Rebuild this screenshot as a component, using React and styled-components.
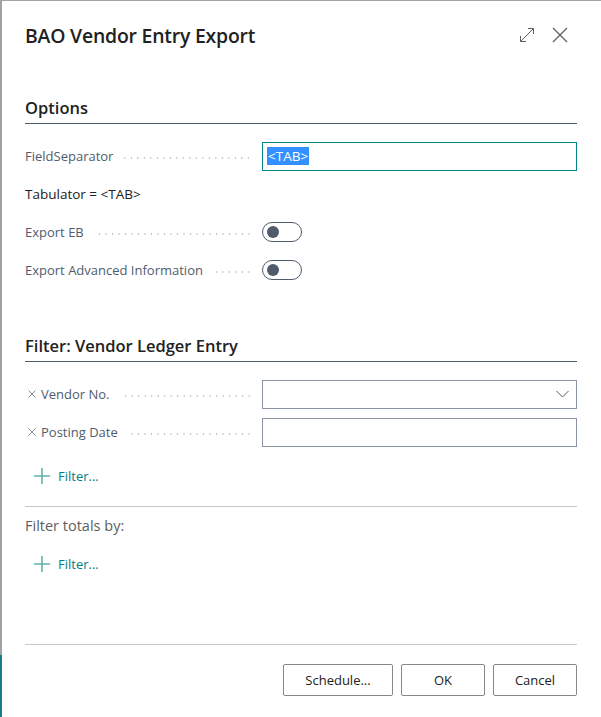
import styled, { createGlobalStyle } from 'styled-components'

const GlobalStyle = createGlobalStyle`
  html, body {
    margin: 0;
    padding: 0;
    height: 100%;
  }
  body {
    background: linear-gradient(to bottom, #9ea3a8 0, #9ea3a8 655px, #1d7c83 655px);
    font-family: 'Open Sans', 'Noto Sans', sans-serif;
    overflow: hidden;
  }
`

const Dialog = styled.div`
  box-sizing: border-box;
  margin: 1px 0 0 2px;
  height: 716px;
  background: #fff;
  display: flex;
  flex-direction: column;
  padding: 0 24px 0 23px;
  color: #212121;
`

const Header = styled.div`
  display: flex;
  align-items: center;
  justify-content: space-between;
  padding-top: 19px;
  height: 30px;
`

const Title = styled.h1`
  margin: 0;
  font-size: 19.4px;
  font-weight: 600;
  letter-spacing: -0.2px;
  color: #212121;
`

const HeaderIcons = styled.div`
  display: flex;
  align-items: center;
  gap: 17px;
  margin-right: 9px;

  svg {
    display: block;
  }
`

const SectionTitle = styled.h2`
  margin: ${p => p.$top}px 0 0;
  font-size: 16.5px;
  font-weight: 600;
  line-height: 24px;
  padding-bottom: 3px;
  border-bottom: 1px solid #505c6d;
  color: #212121;
`

const Rows = styled.div`
  display: flex;
  flex-direction: column;
  gap: 10px;
  margin-top: 18px;
`

const Row = styled.div`
  display: flex;
  align-items: center;
  height: 28px;
`

const LabelCell = styled.div`
  width: 237px;
  flex-shrink: 0;
  display: flex;
  align-items: center;
  padding-right: 10px;
  box-sizing: border-box;
`

const Label = styled.span`
  font-size: 13px;
  color: #505c6d;
  white-space: nowrap;
  display: flex;
  align-items: center;
  gap: 5px;

  svg {
    display: block;
    margin-left: 3px;
  }
`

const Leader = styled.span`
  flex: 1;
  height: 2px;
  margin: 3px 0 0 10px;
  background-image: radial-gradient(circle, #bfc3c8 0.7px, transparent 1.1px);
  background-size: 6.5px 2px;
  background-repeat: repeat-x;
  background-position: right center;
`

const InfoText = styled.span`
  font-size: 13.5px;
  color: #212121;
`

const Input = styled.div`
  flex: 1;
  box-sizing: border-box;
  height: 29px;
  border: 1px solid ${p => (p.$focused ? '#00858a' : '#8a94a4')};
  display: flex;
  align-items: center;
  justify-content: space-between;
  padding: 0 7px 0 4px;
  font-size: 13.5px;
`

const Selected = styled.span`
  background: #3390ff;
  color: #fff;
  line-height: 18px;
  padding: 0 1px;
`

const Toggle = styled.div`
  box-sizing: border-box;
  width: 40px;
  height: 20px;
  border: 1px solid #505c6d;
  border-radius: 10px;
  display: flex;
  align-items: center;
  padding-left: 4px;

  &::before {
    content: '';
    width: 12px;
    height: 12px;
    border-radius: 50%;
    background: #505c6d;
  }
`

const AddFilter = styled.div`
  display: flex;
  align-items: center;
  gap: 8px;
  height: 28px;
  padding-left: 9px;
  margin-top: ${p => p.$top}px;
  font-size: 13px;
  color: #00807f;

  svg {
    display: block;
  }
`

const Divider = styled.div`
  height: 1px;
  background: #c8c8c8;
  margin-top: ${p => p.$top}px;
`

const TotalsLabel = styled.div`
  margin-top: 9px;
  font-size: 14.5px;
  line-height: 20px;
  color: #605e5c;
`

const Spacer = styled.div`
  flex: 1;
`

const Footer = styled.div`
  display: flex;
  justify-content: flex-end;
  gap: 8px;
  padding: 19px 0 21px;
`

const Button = styled.button`
  box-sizing: border-box;
  width: ${p => p.$w}px;
  height: 32px;
  border: 1px solid #8a8886;
  border-radius: 2px;
  background: #fff;
  font-family: inherit;
  font-size: 13px;
  color: #212121;
`

const ExpandIcon = () => (
  <svg width="16" height="16" viewBox="0 0 16 16" fill="none" stroke="#616161" strokeWidth="1">
    <path d="M1.5 14.5 L14.5 1.5 M9 1.5 H14.5 V7 M1.5 9 V14.5 H7" />
  </svg>
)

const CloseIcon = () => (
  <svg width="16" height="16" viewBox="0 0 16 16" fill="none" stroke="#616161" strokeWidth="1.3">
    <path d="M1 1 L15 15 M15 1 L1 15" />
  </svg>
)

const RemoveIcon = () => (
  <svg width="8" height="8" viewBox="0 0 8 8" fill="none" stroke="#8a8f98" strokeWidth="1">
    <path d="M0.5 0.5 L7.5 7.5 M7.5 0.5 L0.5 7.5" />
  </svg>
)

const Chevron = () => (
  <svg width="13" height="8" viewBox="0 0 13 8" fill="none" stroke="#505c6d" strokeWidth="1">
    <path d="M0.5 1 L6.5 7 L12.5 1" />
  </svg>
)

const Plus = () => (
  <svg width="16" height="16" viewBox="0 0 16 16" fill="none" stroke="#5fb1b0" strokeWidth="1.6">
    <path d="M8 0 V16 M0 8 H16" />
  </svg>
)

const FieldRow = ({ label, removable, children }) => (
  <Row>
    <LabelCell>
      <Label>
        {removable && <RemoveIcon />}
        {label}
      </Label>
      <Leader />
    </LabelCell>
    {children}
  </Row>
)

export default function App() {
  return (
    <>
      <GlobalStyle />
      <Dialog>
        <Header>
          <Title>BAO Vendor Entry Export</Title>
          <HeaderIcons>
            <ExpandIcon />
            <CloseIcon />
          </HeaderIcons>
        </Header>

        <SectionTitle $top={46}>Options</SectionTitle>
        <Rows>
          <FieldRow label="FieldSeparator">
            <Input $focused>
              <Selected>&lt;TAB&gt;</Selected>
            </Input>
          </FieldRow>
          <Row>
            <InfoText>Tabulator = &lt;TAB&gt;</InfoText>
          </Row>
          <FieldRow label="Export EB">
            <Toggle />
          </FieldRow>
          <FieldRow label="Export Advanced Information">
            <Toggle />
          </FieldRow>
        </Rows>

        <SectionTitle $top={50}>Filter: Vendor Ledger Entry</SectionTitle>
        <Rows>
          <FieldRow label="Vendor No." removable>
            <Input>
              <span />
              <Chevron />
            </Input>
          </FieldRow>
          <FieldRow label="Posting Date" removable>
            <Input />
          </FieldRow>
        </Rows>
        <AddFilter $top={16}>
          <Plus />
          Filter...
        </AddFilter>

        <Divider $top={16} />
        <TotalsLabel>Filter totals by:</TotalsLabel>
        <AddFilter $top={14}>
          <Plus />
          Filter...
        </AddFilter>

        <Spacer />
        <Divider $top={0} />
        <Footer>
          <Button $w={110}>Schedule...</Button>
          <Button $w={84}>OK</Button>
          <Button $w={84}>Cancel</Button>
        </Footer>
      </Dialog>
    </>
  )
}
